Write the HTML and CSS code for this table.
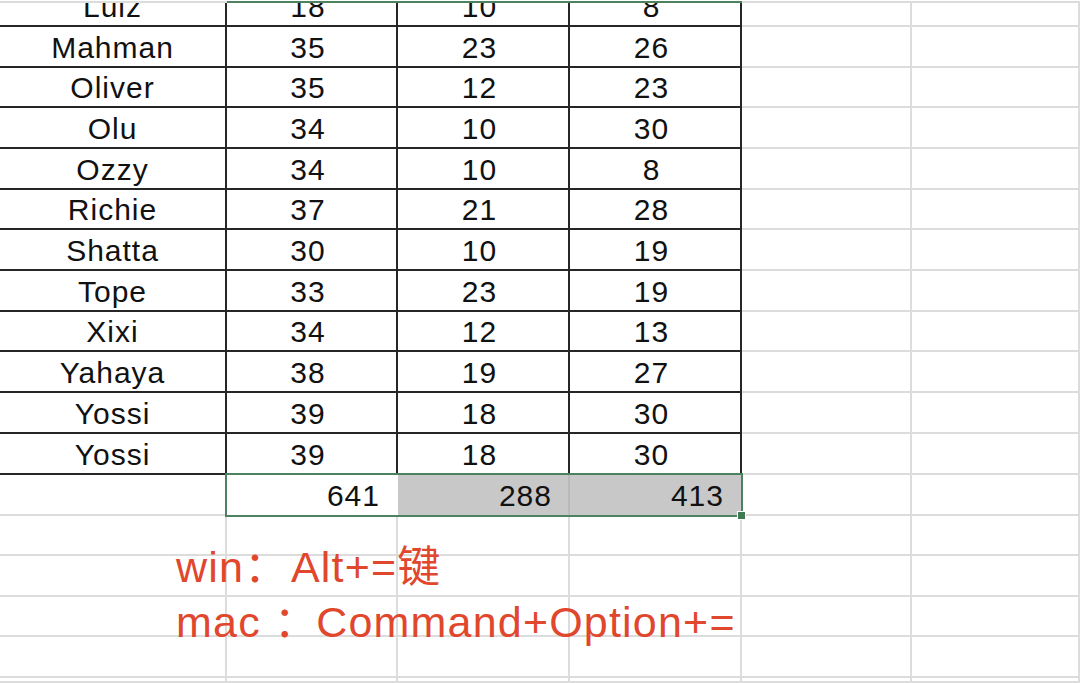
FILE: index.html
```html
<!DOCTYPE html>
<html lang="zh-CN">
<head>
<meta charset="utf-8">
<title>Sheet</title>
<link rel="stylesheet" href="styles.css">
</head>
<body>
<div class="page">
  <div class="sheet">
    <!-- header strip -->
    <div class="c strip"></div><div class="c strip sel"></div><div class="c strip sel"></div><div class="c strip sel"></div><div class="c strip"></div><div class="c strip"></div>

    <div class="c name top"><span>Luiz</span></div><div class="c num top"><span>18</span></div><div class="c num top"><span>10</span></div><div class="c num top"><span>8</span></div><div class="c g top"></div><div class="c g top"></div>
    <div class="c name"><span>Mahman</span></div><div class="c num"><span>35</span></div><div class="c num"><span>23</span></div><div class="c num"><span>26</span></div><div class="c g"></div><div class="c g"></div>
    <div class="c name"><span>Oliver</span></div><div class="c num"><span>35</span></div><div class="c num"><span>12</span></div><div class="c num"><span>23</span></div><div class="c g"></div><div class="c g"></div>
    <div class="c name"><span>Olu</span></div><div class="c num"><span>34</span></div><div class="c num"><span>10</span></div><div class="c num"><span>30</span></div><div class="c g"></div><div class="c g"></div>
    <div class="c name"><span>Ozzy</span></div><div class="c num"><span>34</span></div><div class="c num"><span>10</span></div><div class="c num"><span>8</span></div><div class="c g"></div><div class="c g"></div>
    <div class="c name"><span>Richie</span></div><div class="c num"><span>37</span></div><div class="c num"><span>21</span></div><div class="c num"><span>28</span></div><div class="c g"></div><div class="c g"></div>
    <div class="c name"><span>Shatta</span></div><div class="c num"><span>30</span></div><div class="c num"><span>10</span></div><div class="c num"><span>19</span></div><div class="c g"></div><div class="c g"></div>
    <div class="c name"><span>Tope</span></div><div class="c num"><span>33</span></div><div class="c num"><span>23</span></div><div class="c num"><span>19</span></div><div class="c g"></div><div class="c g"></div>
    <div class="c name"><span>Xixi</span></div><div class="c num"><span>34</span></div><div class="c num"><span>12</span></div><div class="c num"><span>13</span></div><div class="c g"></div><div class="c g"></div>
    <div class="c name"><span>Yahaya</span></div><div class="c num"><span>38</span></div><div class="c num"><span>19</span></div><div class="c num"><span>27</span></div><div class="c g"></div><div class="c g"></div>
    <div class="c name"><span>Yossi</span></div><div class="c num"><span>39</span></div><div class="c num"><span>18</span></div><div class="c num"><span>30</span></div><div class="c g"></div><div class="c g"></div>
    <div class="c name"><span>Yossi</span></div><div class="c num"><span>39</span></div><div class="c num"><span>18</span></div><div class="c num"><span>30</span></div><div class="c g"></div><div class="c g"></div>

    <div class="c g tr col1"></div>
    <div class="c total tr col2"><span>641</span></div>
    <div class="c total shade tr col3"><span>288</span></div>
    <div class="c total shade last tr col4"><span>413</span></div>
    <div class="c g tr col5"></div>
    <div class="c g tr col6"></div>
    <div class="selection"><div class="handle"></div></div>

    <div class="c g"></div><div class="c g"></div><div class="c g"></div><div class="c g"></div><div class="c g"></div><div class="c g"></div>
    <div class="c g"></div><div class="c g"></div><div class="c g"></div><div class="c g"></div><div class="c g"></div><div class="c g"></div>
    <div class="c g"></div><div class="c g"></div><div class="c g"></div><div class="c g"></div><div class="c g"></div><div class="c g"></div>
    <div class="c g"></div><div class="c g"></div><div class="c g"></div><div class="c g"></div><div class="c g"></div><div class="c g"></div>
    <div class="c g"></div><div class="c g"></div><div class="c g"></div><div class="c g"></div><div class="c g"></div><div class="c g"></div>
  </div>

  <div class="note">
    <div class="note-line">win<span class="fw">：</span> Alt+=键</div>
    <div class="note-line">mac <span class="fw tight">：</span> Command+Option+=</div>
  </div>
</div>
</body>
</html>
```

FILE: styles.css
```css
html, body {
  margin: 0;
  padding: 0;
  background: #ffffff;
}

body {
  width: 1080px;
  height: 683px;
  overflow: hidden;
  font-family: "Liberation Sans", Arial, "Noto Sans CJK SC", sans-serif;
}

.page {
  position: relative;
  width: 1080px;
  height: 683px;
}

.sheet {
  display: grid;
  grid-template-columns: 227px 171px 172px 172px 170px 168px;
  grid-template-rows: 3px 24px 41px 40px 41px 41px 40px 41px 41px 40px 41px 41px 41px 41px 40px 41px 40px 41px 5px;
}

.c {
  box-sizing: border-box;
  border-right: 2px solid #dcdcdc;
  border-bottom: 2px solid #dcdcdc;
  display: flex;
  align-items: flex-end;
  justify-content: center;
  overflow: hidden;
  font-size: 30px;
  letter-spacing: 1px;
  color: #111111;
  background: #ffffff;
}

.c span {
  display: block;
  line-height: 37px;
  height: 37px;
  white-space: nowrap;
}

.strip {
  border-right: none;
}

.strip.sel {
  border-bottom-color: #4c8260;
}

.name {
  border-bottom-color: #262626;
  border-right-color: #262626;
}

.num {
  border-bottom-color: #262626;
  border-right-color: #262626;
  padding-right: 7px;
}

.tr {
  grid-row: 14;
}

.col1 { grid-column: 1; }
.col2 { grid-column: 2; }
.col3 { grid-column: 3; }
.col4 { grid-column: 4; }
.col5 { grid-column: 5; }
.col6 { grid-column: 6; }

.total {
  justify-content: flex-end;
  padding-right: 16px;
  border-right-color: #ffffff;
  border-bottom-color: #ffffff;
}

.shade {
  background: #c8c8c8;
  border-right-color: #b9b9b9;
  border-bottom-color: #c8c8c8;
}

.shade.last {
  border-right-color: #c8c8c8;
}

.selection {
  grid-row: 14;
  grid-column: 2 / 5;
  margin: -2px -1px -1px -2px;
  border: 2px solid #4c8260;
  position: relative;
  pointer-events: none;
}

.handle {
  position: absolute;
  right: -5px;
  bottom: -5px;
  width: 7px;
  height: 7px;
  background: #3f7a53;
  border: 1px solid #ffffff;
}

.note {
  position: absolute;
  left: 176px;
  top: 540px;
  color: #e0472d;
  font-family: "Liberation Sans", Arial, "Noto Sans CJK SC", sans-serif;
  font-size: 43px;
  letter-spacing: 1.2px;
  line-height: 55px;
}

.note-line {
  white-space: nowrap;
}

.fw {
  letter-spacing: -7px;
}

.fw.tight {
  letter-spacing: -14px;
}
```
